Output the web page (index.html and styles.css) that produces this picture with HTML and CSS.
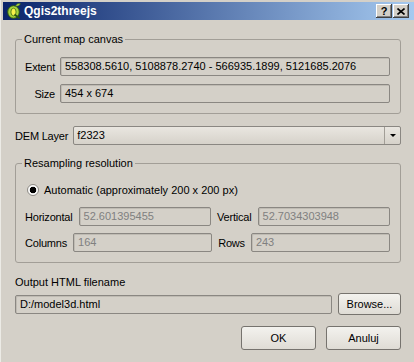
FILE: index.html
```html
<!DOCTYPE html>
<html lang="pl">
<head>
  <meta charset="UTF-8">
  <title>Qgis2threejs</title>
  <link rel="stylesheet" href="styles.css">
</head>
<body>
  <div class="window">
    <div class="titlebar">
      <svg class="app-icon" width="14" height="16" viewBox="0 0 14 16">
        <ellipse cx="6.5" cy="9" rx="5.8" ry="6.3" fill="#a6d43c" stroke="#2a5512" stroke-width="1"/>
        <ellipse cx="6.5" cy="9" rx="2.6" ry="3.8" fill="#f7f24a" stroke="#3d6b14" stroke-width="0.8"/>
        <path d="M7.5 11.5 L12.5 15.3" stroke="#2a5512" stroke-width="1.8"/>
        <path d="M8.5 3 C9.5 0.5 12 0.3 13.5 0.8 C12.5 3 10.5 3.6 8.5 3 Z" fill="#b9e04f" stroke="#2a5512" stroke-width="0.6"/>
      </svg>
      <span class="title">Qgis2threejs</span>
      <div class="title-buttons">
        <span class="tbtn">?</span>
        <span class="tbtn">
          <svg width="8" height="7" viewBox="0 0 8 7"><path d="M0.5 0.5 L7.5 6.5 M7.5 0.5 L0.5 6.5" stroke="#000" stroke-width="1.6"/></svg>
        </span>
      </div>
    </div>

    <div class="dialog">
      <!-- aktualny widok mapy -->
      <div class="group">
        <div class="group-title">Current map canvas</div>
        <div class="form-grid">
          <label>Extent</label>
          <div class="field">558308.5610, 5108878.2740 - 566935.1899, 5121685.2076</div>
          <label>Size</label>
          <div class="field">454 x 674</div>
        </div>
      </div>

      <div class="dem-row">
        <label>DEM Layer</label>
        <div class="combo">
          <span class="combo-text">f2323</span>
          <span class="combo-arrow"></span>
        </div>
      </div>

      <!-- rozdzielczosc -->
      <div class="group group-resample">
        <div class="group-title">Resampling resolution</div>
        <div class="radio-row">
          <span class="radio"></span>
          <span>Automatic (approximately 200 x 200 px)</span>
        </div>
        <div class="pair-row">
          <label>Horizontal</label>
          <div class="field disabled">52.601395455</div>
          <label>Vertical</label>
          <div class="field disabled">52.7034303948</div>
        </div>
        <div class="pair-row second">
          <label>Columns</label>
          <div class="field disabled">164</div>
          <label>Rows</label>
          <div class="field disabled">243</div>
        </div>
      </div>

      <div class="output-label">Output HTML filename</div>
      <div class="output-row">
        <div class="field">D:/model3d.html</div>
        <button class="btn browse">Browse...</button>
      </div>

      <div class="actions">
        <button class="btn action">OK</button>
        <button class="btn action">Anuluj</button>
      </div>
    </div>
  </div>
</body>
</html>
```
FILE: styles.css
```css
body {
  margin: 0;
  background-color: #d4d0c8;
  font-family: "Liberation Sans", Arial, sans-serif;
  font-size: 11px;
  color: #000;
}

.window {
  padding: 2px 0 0 3px;
  min-height: 360px;
  box-shadow: inset 1px 0 0 #ecebe6;
}

/* pasek tytulu */
.titlebar {
  height: 18px;
  display: flex;
  align-items: center;
  padding: 0 5px 0 4px;
  background: linear-gradient(to right, #0a246a, #a6caf0);
  color: #fff;
}

.app-icon {
  flex: none;
}

.title {
  flex: 1;
  margin-left: 3px;
  font-weight: bold;
  font-size: 12px;
}

.title-buttons {
  display: flex;
  gap: 1px;
}

.tbtn {
  width: 16px;
  height: 14px;
  box-sizing: border-box;
  display: flex;
  align-items: center;
  justify-content: center;
  background-color: #d4d0c8;
  color: #000;
  font-weight: bold;
  font-size: 11px;
  box-shadow: inset -1px -1px 0 #404040, inset 1px 1px 0 #fff, inset -2px -2px 0 #808080;
}

.dialog {
  padding: 19px 13px 0 12px;
}

label {
  letter-spacing: -0.2px;
}

.group {
  border: 1px solid #a29e97;
  border-radius: 3px;
  padding: 0 10px 10px 9px;
}

.group-title {
  width: fit-content;
  margin: -8px 0 0 -3px;
  padding: 0 2px;
  line-height: 14px;
  background-color: #d4d0c8;
}

.form-grid {
  display: grid;
  grid-template-columns: auto 1fr;
  column-gap: 5px;
  row-gap: 8px;
  margin-top: 11px;
  align-items: center;
}

.form-grid label {
  text-align: right;
}

.field {
  height: 19px;
  box-sizing: border-box;
  border: 1px solid #8a8782;
  border-radius: 2px;
  padding: 0 4px;
  line-height: 17px;
  white-space: nowrap;
  overflow: hidden;
  box-shadow: inset 1px 1px 0 #bfbbb3;
}

.field.disabled {
  color: #808080;
}

.dem-row {
  display: flex;
  align-items: center;
  gap: 5px;
  margin-top: 12px;
}

.combo {
  flex: 1;
  height: 19px;
  box-sizing: border-box;
  display: flex;
  border: 1px solid #8a8782;
  border-radius: 2px;
  background: linear-gradient(#e9e6e0, #d6d2ca);
}

.combo-text {
  flex: 1;
  padding-left: 3px;
  line-height: 17px;
}

.combo-arrow {
  width: 15px;
  border-left: 1px solid #a29e97;
  display: flex;
  align-items: center;
  justify-content: center;
}

.combo-arrow::after {
  content: "";
  border-left: 3px solid transparent;
  border-right: 3px solid transparent;
  border-top: 3px solid #000;
}

.group-resample {
  margin-top: 18px;
}

.radio-row {
  display: flex;
  align-items: center;
  gap: 5px;
  margin-top: 13px;
  line-height: 14px;
}

.radio {
  width: 12px;
  height: 12px;
  box-sizing: border-box;
  margin-left: 2px;
  border: 1px solid #8d8a85;
  border-radius: 50%;
  background: radial-gradient(circle, #000 0 3px, #fbfbfa 3.6px);
}

.pair-row {
  display: flex;
  align-items: center;
  gap: 6px;
  margin-top: 10px;
}

.pair-row.second {
  margin-top: 7px;
}

.pair-row .field {
  flex: 1 1 0;
  min-width: 0;
}

.output-label {
  margin-top: 12px;
  line-height: 14px;
}

.output-row {
  display: flex;
  align-items: center;
  gap: 6px;
  margin-top: 4px;
}

.output-row .field {
  flex: 1;
}

.btn {
  font: inherit;
  color: #000;
  padding: 0;
  border: 1px solid #76736e;
  border-radius: 3px;
  background: linear-gradient(#f3f2ee, #dfdcd5);
  cursor: pointer;
}

.browse {
  width: 63px;
  height: 22px;
}

.actions {
  display: flex;
  justify-content: flex-end;
  gap: 10px;
  margin-top: 11px;
}

.action {
  width: 75px;
  height: 24px;
}
```
